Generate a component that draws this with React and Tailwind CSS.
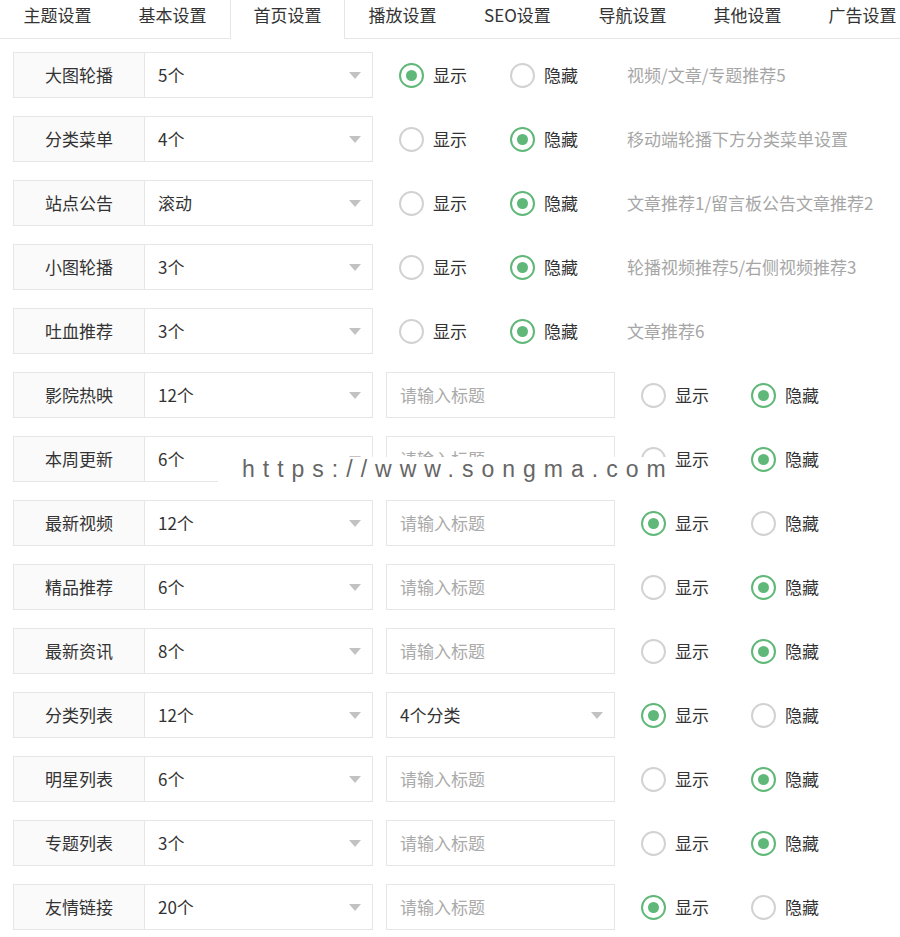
import React from 'react';

const tabs = ['主题设置', '基本设置', '首页设置', '播放设置', 'SEO设置', '导航设置', '其他设置', '广告设置'];

// rows with a hint text after the radios
const topRows = [
  { label: '大图轮播', value: '5个', show: true, hint: '视频/文章/专题推荐5' },
  { label: '分类菜单', value: '4个', show: false, hint: '移动端轮播下方分类菜单设置' },
  { label: '站点公告', value: '滚动', show: false, hint: '文章推荐1/留言板公告文章推荐2' },
  { label: '小图轮播', value: '3个', show: false, hint: '轮播视频推荐5/右侧视频推荐3' },
  { label: '吐血推荐', value: '3个', show: false, hint: '文章推荐6' },
];

// rows with a title input (or second select) before the radios
const listRows = [
  { label: '影院热映', value: '12个', show: false },
  { label: '本周更新', value: '6个', show: false },
  { label: '最新视频', value: '12个', show: true },
  { label: '精品推荐', value: '6个', show: false },
  { label: '最新资讯', value: '8个', show: false },
  { label: '分类列表', value: '12个', show: true, select: '4个分类' },
  { label: '明星列表', value: '6个', show: false },
  { label: '专题列表', value: '3个', show: false },
  { label: '友情链接', value: '20个', show: true },
];

const Arrow = () => (
  <span className="w-0 h-0 border-x-[6px] border-x-transparent border-t-[7px] border-t-[#c2c2c2] mr-[11px]" />
);

const Radio = ({ checked, text, className = '' }) => (
  <div className={`flex items-center gap-[9px] shrink-0 ${className}`}>
    {checked ? (
      <span className="w-[25px] h-[25px] rounded-full border-2 border-[#5fb878] flex items-center justify-center">
        <span className="w-[11px] h-[11px] rounded-full bg-[#5fb878]" />
      </span>
    ) : (
      <span className="w-[25px] h-[25px] rounded-full border-2 border-[#d2d2d2]" />
    )}
    <span className="text-[#333]">{text}</span>
  </div>
);

const LabelSelect = ({ label, value }) => (
  <div className="flex h-[46px] shrink-0">
    <div className="w-[132px] border border-[#e6e6e6] bg-[#fafafa] flex items-center justify-center text-[#333]">
      {label}
    </div>
    <div className="w-[228px] border-y border-r border-[#e6e6e6] flex items-center justify-between pl-[13px]">
      <span className="text-[#333]">{value}</span>
      <Arrow />
    </div>
  </div>
);

const App = () => {
  return (
    <div className="relative w-[900px] h-[937px] overflow-hidden bg-white text-[17px] font-['Noto_Sans_CJK_SC','Microsoft_YaHei',sans-serif]">
      {/* Tabs */}
      <div className="flex h-[39px] border-b border-[#e6e6e6]">
        {tabs.map((t, i) => (
          <div
            key={t}
            className={`w-[115px] h-[39px] shrink-0 flex items-center justify-center pb-[9px] text-[#333] ${
              i === 2 ? 'bg-white border-x border-[#e6e6e6]' : ''
            }`}
          >
            {t}
          </div>
        ))}
      </div>

      {/* Form rows */}
      <div className="flex flex-col gap-[18px] pt-[13px] pl-[13px]">
        {topRows.map((r) => (
          <div key={r.label} className="flex items-center">
            <LabelSelect label={r.label} value={r.value} />
            <Radio checked={r.show} text="显示" className="w-[111px] ml-[26px]" />
            <Radio checked={!r.show} text="隐藏" className="w-[117px]" />
            <span className="text-[#a6a6a6] whitespace-nowrap">{r.hint}</span>
          </div>
        ))}

        {listRows.map((r) => (
          <div key={r.label} className="flex items-center">
            <LabelSelect label={r.label} value={r.value} />
            {r.select ? (
              <div className="w-[229px] h-[46px] ml-[13px] border border-[#e6e6e6] flex items-center justify-between pl-[13px]">
                <span className="text-[#333]">{r.select}</span>
                <Arrow />
              </div>
            ) : (
              <div className="w-[229px] h-[46px] ml-[13px] border border-[#e6e6e6] flex items-center pl-[13px] text-[#aaa]">
                请输入标题
              </div>
            )}
            <Radio checked={r.show} text="显示" className="w-[110px] ml-[26px]" />
            <Radio checked={!r.show} text="隐藏" />
          </div>
        ))}
      </div>

      {/* watermark overlay */}
      <div className="absolute left-[218px] top-[457px] w-[452px] h-[25px] bg-white pl-[24px] text-[23px] leading-[25px] tracking-[8px] text-[#666] font-['Liberation_Sans',sans-serif] whitespace-nowrap">
        https://www.songma.com
      </div>
    </div>
  );
};

export default App;
